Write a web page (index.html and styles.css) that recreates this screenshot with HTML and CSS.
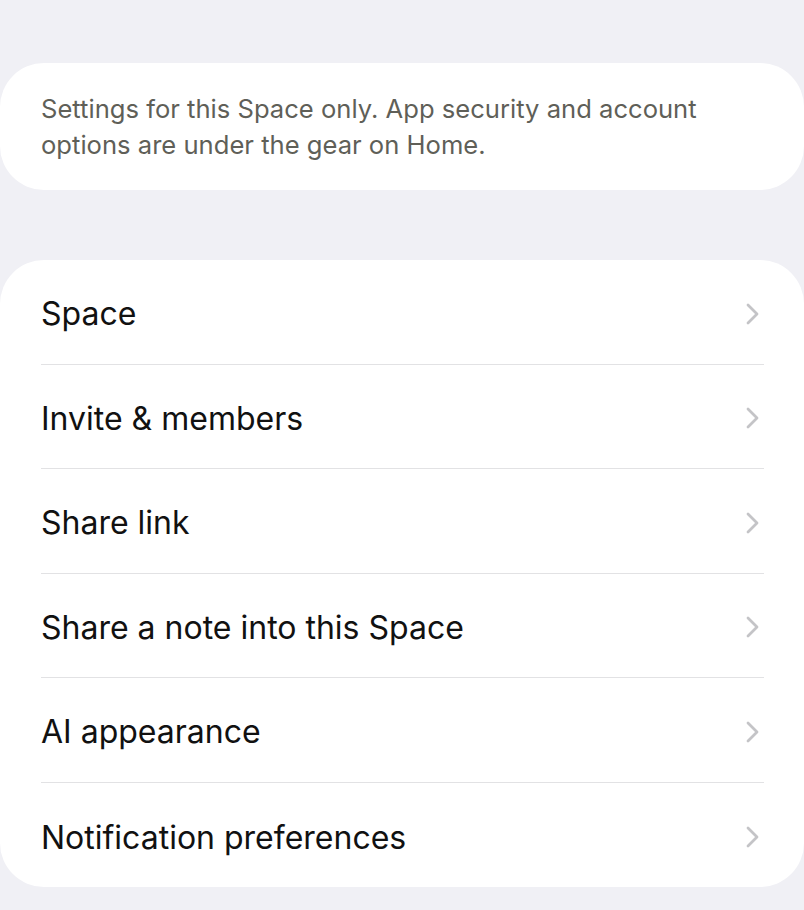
FILE: index.html
```html
<!DOCTYPE html>
<html lang="en">
<head>
  <meta charset="UTF-8">
  <meta name="viewport" content="width=device-width, initial-scale=1.0">
  <title>Space Settings</title>
  <link rel="stylesheet" href="styles.css">
</head>
<body>
  <div class="page">
    <div class="card note">
      <p>Settings for this Space only. App security and account options are under the gear on Home.</p>
    </div>

    <div class="card list">
      <a class="row" href="#"><span>Space</span><svg class="chevron" viewBox="0 0 14 22"><path d="M2 2l9 9-9 9"/></svg></a>
      <a class="row" href="#"><span>Invite &amp; members</span><svg class="chevron" viewBox="0 0 14 22"><path d="M2 2l9 9-9 9"/></svg></a>
      <a class="row" href="#"><span>Share link</span><svg class="chevron" viewBox="0 0 14 22"><path d="M2 2l9 9-9 9"/></svg></a>
      <a class="row" href="#"><span>Share a note into this Space</span><svg class="chevron" viewBox="0 0 14 22"><path d="M2 2l9 9-9 9"/></svg></a>
      <a class="row" href="#"><span>AI appearance</span><svg class="chevron" viewBox="0 0 14 22"><path d="M2 2l9 9-9 9"/></svg></a>
      <a class="row" href="#"><span>Notification preferences</span><svg class="chevron" viewBox="0 0 14 22"><path d="M2 2l9 9-9 9"/></svg></a>
    </div>
  </div>
</body>
</html>
```

FILE: styles.css
```css
body {
  margin: 0;
  padding: 0;
  background-color: #f0f0f5;
  font-family: "Inter", "Liberation Sans", sans-serif;
}

.page {
  padding: 63px 0 23px;
  display: flex;
  flex-direction: column;
  gap: 70px;
}

.card {
  background: white;
  border-radius: 44px;
}

.note {
  padding: 28px 41px 27px;
}

.note p {
  margin: 0;
  font-size: 25.6px;
  line-height: 36px;
  color: #5f5f58;
}

.list {
  padding: 0 40px 0 41px;
}

.row {
  box-sizing: border-box;
  display: flex;
  align-items: center;
  justify-content: space-between;
  height: 104.5px;
  padding-top: 4px;
  border-bottom: 1.5px solid #e2e2e4;
  color: #111;
  text-decoration: none;
  font-size: 32px;
}

.row:last-child {
  border-bottom: none;
  padding-top: 5px;
}

.chevron {
  width: 14px;
  height: 22px;
  margin-right: 4px;
  fill: none;
  stroke: #c4c4c7;
  stroke-width: 2.8;
  stroke-linecap: round;
  stroke-linejoin: round;
}
```
